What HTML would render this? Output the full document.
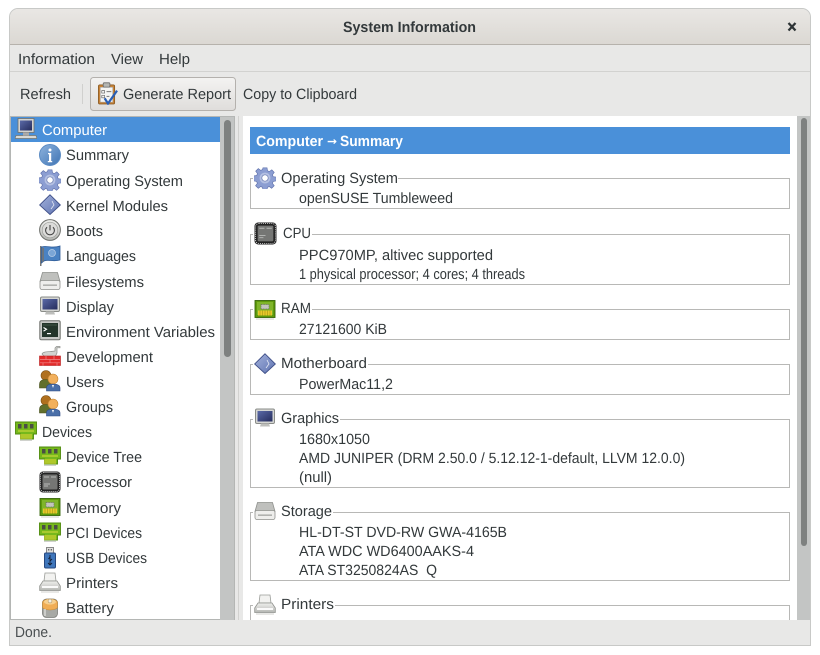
<!DOCTYPE html>
<html><head><meta charset="utf-8"><title>System Information</title>
<style>
html,body{margin:0;padding:0;background:#fff;width:820px;height:655px;overflow:hidden}
svg{display:block}
text{font-family:"Liberation Sans",sans-serif;font-size:14.8px;fill:#33393b;white-space:pre;text-rendering:geometricPrecision}
.b{font-weight:bold}
.w{fill:#fff}
use{filter:blur(.3px)}
</style></head><body>
<svg width="820" height="655" viewBox="0 0 820 655" xmlns="http://www.w3.org/2000/svg">
<defs>
<linearGradient id="tb" x1="0" y1="0" x2="0" y2="1"><stop offset="0" stop-color="#e9e7e4"/><stop offset="1" stop-color="#dbd8d3"/></linearGradient>
<linearGradient id="btn" x1="0" y1="0" x2="0" y2="1"><stop offset="0" stop-color="#f4f3f2"/><stop offset="1" stop-color="#dfdddb"/></linearGradient>
<linearGradient id="blue" x1="0" y1="0" x2="1" y2="1"><stop offset="0" stop-color="#8fb4de"/><stop offset="1" stop-color="#3f74b4"/></linearGradient>
<linearGradient id="gry" x1="0" y1="0" x2="0" y2="1"><stop offset="0" stop-color="#f0f0ee"/><stop offset="1" stop-color="#b4b6b2"/></linearGradient>
<linearGradient id="scr" x1="0" y1="0" x2="1" y2="1"><stop offset="0" stop-color="#5b6aa8"/><stop offset="1" stop-color="#252c5c"/></linearGradient>
<linearGradient id="kg" x1="0" y1="0" x2="1" y2="1"><stop offset="0" stop-color="#a4b2dc"/><stop offset="1" stop-color="#5d72b0"/></linearGradient>
<symbol id="info" viewBox="0 0 22 22"><circle cx="11" cy="11" r="10.500" fill="url(#blue)" stroke="#5c8cc4"/><circle cx="11" cy="6" r="1.500" fill="#fff"/><path d="M9 9h3.200v8h1v1.200H8.800V17h1.200v-6.800H9z" fill="#fff"/></symbol>
<symbol id="gear" viewBox="0 0 22 22"><path d="M9 .8h4l.5 3 1.800.8 2.500-1.800 2.400 2.600-1.800 2.400.8 1.900 3 .4v3.800l-3 .5-.8 1.900 1.800 2.400-2.600 2.600-2.400-1.800-1.800.8-.4 3H9l-.5-3-1.800-.8-2.400 1.800-2.700-2.600 1.800-2.400-.8-1.900-2.900-.5V8.900l3-.4.8-1.900-1.800-2.400 2.600-2.600 2.400 1.800 1.800-.8z" fill="#8c9ed2" stroke="#6274ae" stroke-width=".7"/><circle cx="11" cy="11" r="5.400" fill="#b4c0e2"/><circle cx="11" cy="11" r="3.200" fill="#fff" stroke="#6b7cb0" stroke-width=".7"/></symbol>
<symbol id="kern" viewBox="0 0 22 22"><path d="M11 .8 21.400 11 11 20.500 .6 11z" fill="url(#kg)" stroke="#3f4f88" stroke-width=".9"/><path d="M13 7l2 4-3 4" fill="none" stroke="#e6eaf5" stroke-width=".8"/></symbol>
<symbol id="boot" viewBox="0 0 22 22"><circle cx="11" cy="11" r="10.400" fill="url(#gry)" stroke="#6d6f6b"/><circle cx="11" cy="11" r="7.800" fill="#dcdcda" stroke="#9c9e9a" stroke-width=".7"/><path d="M8 8.200a4.400 4.400 0 1 0 6 0M11 6v5.400" fill="none" stroke="#444" stroke-width="1.100"/></symbol>
<symbol id="lang" viewBox="0 0 22 22"><path d="M1 1h1.500v20H1z" fill="#777"/><path d="M2.500 2C8 0 13 4 21 1v14c-7 2-12-1-16 1l-2.500 2z" fill="#4a82c2" stroke="#2f5c98" stroke-width=".8"/><path d="M2.800 2.500v15l2.200-1.600V3z" fill="#6b7580"/><circle cx="13" cy="8" r="3.500" fill="#7ba6d6" stroke="#bcd0e8" stroke-width=".7"/></symbol>
<symbol id="fs" viewBox="0 0 22 22"><path d="M3.500 1.500h15l2.500 9H1z" fill="#bfc0bd" stroke="#8e908c" stroke-width=".8"/><rect x="1" y="9.500" width="20" height="9" rx="2" fill="#eeeeec" stroke="#8e908c" stroke-width=".8"/><rect x="4" y="13.500" width="14" height="1.300" fill="#a2a4a0"/></symbol>
<symbol id="disp" viewBox="0 0 22 22"><rect x="1.500" y="1" width="19" height="14.500" rx="1.500" fill="#d5d6d3" stroke="#8a8c88"/><rect x="3.500" y="3" width="15" height="10.500" fill="url(#scr)"/><path d="M7 15.500h8l1 3H6z" fill="#bdbebb"/></symbol>
<symbol id="term" viewBox="0 0 22 22"><rect x=".8" y=".8" width="20.400" height="19" rx="1.500" fill="#c8c9c6" stroke="#6f716d"/><rect x="3" y="3" width="16" height="14" fill="#24352a"/><path d="M4.500 7.500l3 1.800-3 1.800" fill="none" stroke="#fff" stroke-width="1.100"/><path d="M8 13h4v1.200H8z" fill="#fff"/><path d="M4 4.500h14v1H4z" fill="#3f5546"/></symbol>
<symbol id="dev" viewBox="0 0 22 22"><path d="M3 9c1-3 8-2 13-3V3l1.500-1.500H21v1.300h-3V8l-1 2-2 2H6z" fill="#d2d3d0" stroke="#8f918d" stroke-width=".7"/><rect x=".5" y="11" width="21" height="9.500" fill="#e22b2b" stroke="#b81e1e" stroke-width=".6"/><path d="M1 14.500h20M1 17.800h20M7 11v3.500M15 11v3.500M11 14.500v3.300M4 17.800v2.700M18 17.800v2.700" stroke="#f08a8a" stroke-width=".7"/></symbol>
<symbol id="user" viewBox="0 0 22 22"><circle cx="7" cy="5.500" r="5" fill="#b0701f" stroke="#7a4d14" stroke-width=".6"/><path d="M.5 18v-3.500c0-4 3-5 6.500-5s6 1.500 6 5V18z" fill="#616f2c" stroke="#464f1c" stroke-width=".6"/><circle cx="14" cy="9" r="5" fill="#f2b05c" stroke="#c08030" stroke-width=".6"/><path d="M7.500 21V18c0-3 3-4 6.500-4s7 1 7 4v3z" fill="#4a6fa8" stroke="#2f4a86" stroke-width=".6"/><path d="M13 15h2l-1 3z" fill="#fff"/></symbol>
<symbol id="pci" viewBox="0 0 22 22"><path d="M.5 1h21v12h-3v5h-13v-5H.5z" fill="#76b81c" stroke="#4f8a0c" stroke-width=".9"/><rect x="3" y="3" width="3.500" height="4.500" fill="#4a4f44"/><rect x="9" y="3" width="3.500" height="4.500" fill="#4a4f44"/><rect x="15" y="3" width="3.500" height="4.500" fill="#4a4f44"/><path d="M6 13v5M8 13v5M10 13v5M12 13v5M14 13v5M16 13v5" stroke="#e8d838" stroke-width="1"/><path d="M3 10h16" stroke="#d8dd40" stroke-width="1"/><path d="M5 19.500h12" stroke="#d0d2cd" stroke-width="1"/></symbol>
<symbol id="cpu" viewBox="0 0 22 22"><rect x=".5" y=".5" width="21" height="21" rx="3.500" fill="#222"/><rect x="1.500" y="1.500" width="19" height="19" rx="3" fill="none" stroke="#cfcfcf" stroke-width=".9" stroke-dasharray="1 1"/><rect x="3.500" y="3.500" width="15" height="15" rx="1" fill="#757674"/><path d="M5 6h5M12 6h5M5 13h6M5 15h4" stroke="#b9bab8" stroke-width=".9"/></symbol>
<symbol id="mem" viewBox="0 0 22 22"><rect x="1" y="1.500" width="20" height="17" fill="#5f9a0c" stroke="#37660a" stroke-width=".9"/><rect x="3" y="3" width="16" height="13" fill="#7fb52a"/><path d="M7 5.500h8v4.500H7z" fill="#c3c6bd" stroke="#6a6e62" stroke-width=".7" stroke-dasharray="1 .6"/><path d="M4 11.500h14v5H4z" fill="#e8c92a"/><path d="M6 11.500v5M8.500 11.500v5M11 11.500v5M13.500 11.500v5M16 11.500v5" stroke="#a49218" stroke-width=".6"/><path d="M2 20h18" stroke="#d0d2cd"/></symbol>
<symbol id="usb" viewBox="0 0 22 22"><rect x="7.500" y=".5" width="7" height="6" fill="#dfdfdd" stroke="#888"/><rect x="9" y="2" width="1.300" height="1.500" fill="#666"/><rect x="11.700" y="2" width="1.300" height="1.500" fill="#666"/><rect x="5.500" y="6" width="11" height="15" rx="1.200" fill="#3f76bb" stroke="#27487f"/><path d="M11 8v10M11 10l-1.500 2M11 14l2-2M9 16l2 2 2-2" fill="none" stroke="#111c33" stroke-width=".9"/></symbol>
<symbol id="prn" viewBox="0 0 22 22"><path d="M6 1h10l1 8H5z" fill="#f2f2f0" stroke="#9a9c98" stroke-width=".8"/><path d="M4 9h14l3.300 5v4.500H.7V14z" fill="url(#gry)" stroke="#8f918d" stroke-width=".8"/><rect x="3" y="14" width="16" height="2" fill="#fafafa"/><path d="M2 20h18" stroke="#d0d1ce"/></symbol>
<symbol id="bat" viewBox="0 0 22 22"><rect x="3.500" y="2" width="15" height="18.500" rx="4" fill="#a7a9a5" stroke="#7b7d79" stroke-width=".8"/><path d="M3.500 5.500a7.500 3.500 0 0 1 15 0V10a7.500 3 0 0 1-15 0z" fill="#f0ad55" stroke="#c08a3a" stroke-width=".6"/><ellipse cx="11" cy="4.800" rx="6" ry="2.800" fill="#f6d090"/><circle cx="11" cy="4" r="2" fill="#f3efe3" stroke="#a88952" stroke-width=".5"/><path d="M6 12v7" stroke="#d8d9d6" stroke-width="1.500"/></symbol>
<symbol id="comp" viewBox="0 0 22 22"><rect x="3" y=".5" width="16" height="14" fill="#d3d3cf" stroke="#6e706c" stroke-width=".8"/><rect x="5" y="2.500" width="12" height="10" fill="url(#scr)"/><path d="M1 17.500h20l1 3H0z" fill="#d8d8d4" stroke="#74766f" stroke-width=".7"/><path d="M8 14.500h6v3H8z" fill="#aaa"/></symbol>
<symbol id="rep" viewBox="0 0 22 24"><rect x="1.500" y="3" width="17" height="20" rx="1.500" fill="#c8843a" stroke="#84541c" stroke-width=".8"/><rect x="3.500" y="5.500" width="13" height="15.500" fill="#f5f5f3" stroke="#999" stroke-width=".5"/><rect x="6.500" y=".8" width="7" height="4.500" rx="1" fill="#b5b6b2" stroke="#666" stroke-width=".8"/><path d="M5 9h3v2.500H5zM5 14h3v2.500H5z" fill="none" stroke="#666" stroke-width=".7"/><path d="M10 10h5M10 15h3" stroke="#777" stroke-width="1"/><path d="M8 17l3.500 5.500L21 9" fill="none" stroke="#2a5fb4" stroke-width="2.300"/></symbol>
</defs>

<!-- window -->
<path d="M9.500 645.500V17a8.500 8.500 0 0 1 8.500-8.500h784a8.500 8.500 0 0 1 8.500 8.500V645.500z" fill="#e8e8e7" stroke="#c8c9c7"/>
<path d="M10 44V17a8 8 0 0 1 8-8h784a8 8 0 0 1 8 8v27z" fill="url(#tb)"/>
<rect x="10" y="44" width="800" height="1" fill="#b6b2ac"/>
<rect x="10" y="71" width="800" height="1" fill="#d2d2d0"/>
<text class="b" x="343" y="32" textLength="133" lengthAdjust="spacingAndGlyphs">System Information</text>
<path d="M788.500 23l7 7.500M795.500 23l-7 7.500" stroke="#2e3436" stroke-width="2.300"/>

<text x="18" y="64" textLength="77" lengthAdjust="spacingAndGlyphs">Information</text>
<text x="111" y="64" textLength="32" lengthAdjust="spacingAndGlyphs">View</text>
<text x="159" y="64" textLength="31" lengthAdjust="spacingAndGlyphs">Help</text>

<!-- toolbar -->
<text x="20" y="99" textLength="51" lengthAdjust="spacingAndGlyphs">Refresh</text>
<rect x="82" y="84" width="1" height="20" fill="#d0d0ce"/>
<rect x="90.500" y="77.500" width="145" height="33" rx="3" fill="url(#btn)" stroke="#b4b1ad"/>
<use href="#rep" x="97" y="82" width="21" height="23"/>
<text x="123" y="99" textLength="108" lengthAdjust="spacingAndGlyphs">Generate Report</text>
<text x="243" y="99" textLength="114" lengthAdjust="spacingAndGlyphs">Copy to Clipboard</text>

<!-- left panel -->
<rect x="10" y="116" width="225" height="504" fill="#b4b6b4"/>
<rect x="11" y="117" width="209" height="502" fill="#fff"/>
<rect x="220" y="117" width="14" height="503" fill="#c3c5c4"/>
<rect x="224" y="120" width="7" height="237" rx="3.500" fill="#7e8180"/>
<rect x="11" y="117" width="209" height="25" fill="#4a90d9"/>
<rect x="238" y="116" width="1" height="504" fill="#d2d2d0"/>

<use href="#comp" x="15" y="118" width="22" height="22"/>
<text class="w" x="42" y="135" textLength="65" lengthAdjust="spacingAndGlyphs">Computer</text>
<use href="#info" x="39" y="144" width="22" height="22"/>
<text x="66" y="160" textLength="63" lengthAdjust="spacingAndGlyphs">Summary</text>
<use href="#gear" x="39" y="169" width="22" height="22"/>
<text x="66" y="186" textLength="117" lengthAdjust="spacingAndGlyphs">Operating System</text>
<use href="#kern" x="39" y="194" width="22" height="22"/>
<text x="66" y="211" textLength="102" lengthAdjust="spacingAndGlyphs">Kernel Modules</text>
<use href="#boot" x="39" y="219" width="22" height="22"/>
<text x="66" y="236" textLength="37" lengthAdjust="spacingAndGlyphs">Boots</text>
<use href="#lang" x="39" y="245" width="22" height="22"/>
<text x="66" y="261" textLength="70" lengthAdjust="spacingAndGlyphs">Languages</text>
<use href="#fs" x="39" y="271" width="22" height="22"/>
<text x="66" y="287" textLength="78" lengthAdjust="spacingAndGlyphs">Filesystems</text>
<use href="#disp" x="39" y="296" width="22" height="22"/>
<text x="66" y="312" textLength="48" lengthAdjust="spacingAndGlyphs">Display</text>
<use href="#term" x="39" y="320" width="22" height="22"/>
<text x="66" y="337" textLength="149" lengthAdjust="spacingAndGlyphs">Environment Variables</text>
<use href="#dev" x="39" y="345" width="22" height="22"/>
<text x="66" y="362" textLength="87" lengthAdjust="spacingAndGlyphs">Development</text>
<use href="#user" x="39" y="370" width="22" height="22"/>
<text x="66" y="387" textLength="38" lengthAdjust="spacingAndGlyphs">Users</text>
<use href="#user" x="39" y="395" width="22" height="22"/>
<text x="66" y="412" textLength="47" lengthAdjust="spacingAndGlyphs">Groups</text>
<use href="#pci" x="15" y="421" width="22" height="22"/>
<text x="42" y="437" textLength="50" lengthAdjust="spacingAndGlyphs">Devices</text>
<use href="#pci" x="39" y="446" width="22" height="22"/>
<text x="66" y="462" textLength="76" lengthAdjust="spacingAndGlyphs">Device Tree</text>
<use href="#cpu" x="39" y="471" width="22" height="22"/>
<text x="66" y="487" textLength="66" lengthAdjust="spacingAndGlyphs">Processor</text>
<use href="#mem" x="39" y="497" width="22" height="22"/>
<text x="66" y="513" textLength="55" lengthAdjust="spacingAndGlyphs">Memory</text>
<use href="#pci" x="39" y="522" width="22" height="22"/>
<text x="66" y="538" textLength="76" lengthAdjust="spacingAndGlyphs">PCI Devices</text>
<use href="#usb" x="39" y="547" width="22" height="22"/>
<text x="66" y="563" textLength="81" lengthAdjust="spacingAndGlyphs">USB Devices</text>
<use href="#prn" x="39" y="572" width="22" height="22"/>
<text x="66" y="588" textLength="52" lengthAdjust="spacingAndGlyphs">Printers</text>
<use href="#bat" x="39" y="597" width="22" height="22"/>
<text x="66" y="613" textLength="48" lengthAdjust="spacingAndGlyphs">Battery</text>

<!-- right panel -->
<rect x="243" y="116" width="554" height="504" fill="#fff"/>
<rect x="797" y="116" width="13" height="504" fill="#c3c5c4"/>
<rect x="801" y="118" width="6" height="428" rx="3" fill="#7e8180"/>
<rect x="250" y="127" width="540" height="27" fill="#4a90d9"/>
<text class="b w" x="256" y="146" textLength="67" lengthAdjust="spacingAndGlyphs">Computer</text>
<text class="b w" x="327" y="145" style="font-family:'DejaVu Sans',sans-serif;font-size:11px" textLength="10" lengthAdjust="spacingAndGlyphs">→</text>
<text class="b w" x="340" y="146" textLength="63" lengthAdjust="spacingAndGlyphs">Summary</text>

<g fill="none" stroke="#b8b8b6">
<path d="M253 178.500h-2.500v30h539v-30H398"/>
<path d="M253 234.500h-2.500v50h539v-50H312"/>
<path d="M253 309.500h-2.500v30h539v-30H312"/>
<path d="M253 364.500h-2.500v30h539v-30H368"/>
<path d="M253 419.500h-2.500v68h539v-68H340"/>
<path d="M253 512.500h-2.500v68h539v-68H333"/>
<path d="M253 605.500h-2.500V620M789.500 620V605.500H335"/>
</g>

<use href="#gear" x="254" y="167" width="22" height="22"/>
<text x="281" y="183" textLength="117" lengthAdjust="spacingAndGlyphs">Operating System</text>
<text x="299" y="203" textLength="154" lengthAdjust="spacingAndGlyphs">openSUSE Tumbleweed</text>

<use href="#cpu" x="254" y="222" width="23" height="23"/>
<text x="283" y="238" textLength="28" lengthAdjust="spacingAndGlyphs">CPU</text>
<text x="299" y="260" textLength="194" lengthAdjust="spacingAndGlyphs">PPC970MP, altivec supported</text>
<text x="299" y="279" textLength="226" lengthAdjust="spacingAndGlyphs">1 physical processor; 4 cores; 4 threads</text>

<use href="#mem" x="254" y="299" width="22" height="22"/>
<text x="281" y="313" textLength="30" lengthAdjust="spacingAndGlyphs">RAM</text>
<text x="299" y="334" textLength="88" lengthAdjust="spacingAndGlyphs">27121600 KiB</text>

<use href="#kern" x="254" y="353" width="22" height="22"/>
<text x="281" y="368" textLength="86" lengthAdjust="spacingAndGlyphs">Motherboard</text>
<text x="299" y="389" textLength="94" lengthAdjust="spacingAndGlyphs">PowerMac11,2</text>

<use href="#disp" x="254" y="408" width="22" height="22"/>
<text x="281" y="423" textLength="58" lengthAdjust="spacingAndGlyphs">Graphics</text>
<text x="299" y="444" textLength="71" lengthAdjust="spacingAndGlyphs">1680x1050</text>
<text x="299" y="463" textLength="386" lengthAdjust="spacingAndGlyphs">AMD JUNIPER (DRM 2.50.0 / 5.12.12-1-default, LLVM 12.0.0)</text>
<text x="299" y="482" textLength="33" lengthAdjust="spacingAndGlyphs">(null)</text>

<use href="#fs" x="254" y="501" width="22" height="22"/>
<text x="281" y="516" textLength="51" lengthAdjust="spacingAndGlyphs">Storage</text>
<text x="299" y="537" textLength="208" lengthAdjust="spacingAndGlyphs">HL-DT-ST DVD-RW GWA-4165B</text>
<text x="299" y="556" textLength="175" lengthAdjust="spacingAndGlyphs">ATA WDC WD6400AAKS-4</text>
<text x="299" y="575" textLength="138" lengthAdjust="spacingAndGlyphs">ATA ST3250824AS  Q</text>

<use href="#prn" x="254" y="594" width="22" height="22"/>
<text x="281" y="609" textLength="53" lengthAdjust="spacingAndGlyphs">Printers</text>

<!-- status -->
<rect x="10" y="620" width="800" height="25" fill="#e8e8e7"/>
<text x="15" y="637" textLength="37" lengthAdjust="spacingAndGlyphs" style="fill:#4a4f51">Done.</text>
</svg>
</body></html>
